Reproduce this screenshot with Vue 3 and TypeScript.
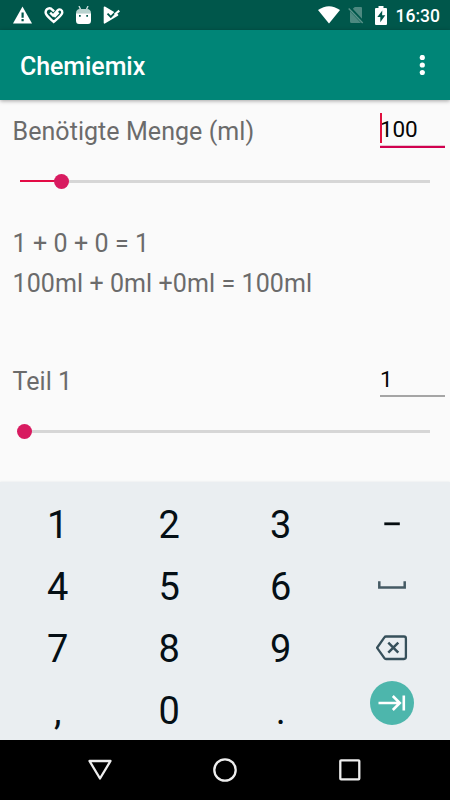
<script setup lang="ts">
import { ref } from 'vue'

interface Mixer {
  label: string
  value: string
  percent: number
  focused: boolean
}

const amount = ref<Mixer>({ label: 'Benötigte Menge (ml)', value: '100', percent: 10, focused: true })
const part = ref<Mixer>({ label: 'Teil 1', value: '1', percent: 1, focused: false })

const keys: string[] = ['1', '2', '3', 'minus', '4', '5', '6', 'space', '7', '8', '9', 'delete', ',', '0', '.', 'next']
const isDigit = (key: string): boolean => key.length === 1
</script>

<template>
  <div class="screen">
    <header class="status">
      <div class="status-left">
        <svg width="21" height="20" viewBox="0 0 21 20">
          <path d="M10.5 1.5 20 18.5H1Z" fill="#fff" />
          <path d="M9.500 7.500h2.200v5.200H9.500zM9.500 14h2.200v2.300H9.500z" fill="#00574b" />
        </svg>
        <svg width="20" height="18" viewBox="0 0 20 18">
          <path d="M10.2 10.8 14.6 6.4M6.2 6.6l2.9 2.9 4.6-5.1C15.8 2.2 18.6 4 18.3 6.7c-.2 2.6-4.2 5.4-8.6 9.2C5.5 12.100 1.700 9.300 1.600 6.600 1.500 2.500 6 .8 8.500 3.900l1.600 1.500" fill="none" stroke="#fff" stroke-width="2.400" />
        </svg>
        <svg width="17" height="19" viewBox="0 0 17 19">
          <path d="M4 0l1.800 4M13 0l-1.800 4" stroke="#c9dedb" stroke-width="1.400" />
          <path d="M1 7.500Q1 3 5 3h7q4 0 4 4.500Z" fill="#b8d2ce" />
          <path d="M1 7.300h15v7.200q0 3.500-3 3.500H4q-3 0-3-3.500Z" fill="#fff" />
          <path d="M4 9.800h1.700M11.300 9.800H13" stroke="#00574b" stroke-width="1.700" />
        </svg>
        <svg width="17" height="18" viewBox="0 0 17 18">
          <path d="M1.500 1.200 14.500 9 1.500 16.800Z" fill="#fff" stroke="#fff" stroke-width="1.600" stroke-linejoin="round" />
          <path d="m4.500 7.600 3.300 3.300 5.400-5.600" fill="none" stroke="#00574b" stroke-width="1.800" />
          <path d="m11.700 8.500 4.600-3.800" stroke="#fff" stroke-width="2.200" />
        </svg>
      </div>
      <div class="status-right">
        <svg class="wifi" width="22" height="18" viewBox="0 0 22 18">
          <path d="M0 4Q11-3.600 22 4L11 17.500Z" fill="#fff" />
        </svg>
        <svg class="sim" width="16" height="18" viewBox="0 0 16 18">
          <path d="M4.800 2.700 6.800 1H13q1 0 1 1v10.800ZM2 5.300 13 17H3.500Q2 17 2 15.500Z" fill="#4d8980" />
          <path d="m.7 2.500 14 14.500" stroke="#5a938a" stroke-width="1.400" />
        </svg>
        <svg class="battery" width="12" height="19" viewBox="0 0 12 19">
          <path d="M3.500 0h5v2H11q1 0 1 1v15q0 1-1 1H1q-1 0-1-1V3q0-1 1-1h2.500Z" fill="#fff" />
          <path d="M7.300 4.500 2.300 11h3v5.300l5-7H7.100Z" fill="#00574b" />
        </svg>
        <span class="clock">16:30</span>
      </div>
    </header>

    <div class="appbar">
      <h1>Chemiemix</h1>
      <svg width="6" height="20" viewBox="0 0 6 20" fill="#fff">
        <circle cx="3.300" cy="2.500" r="2.600" />
        <circle cx="3.300" cy="10" r="2.600" />
        <circle cx="3.300" cy="17.500" r="2.600" />
      </svg>
    </div>

    <main class="content">
      <section class="mixer">
        <div class="row">
          <span class="label">{{ amount.label }}</span>
          <div class="field focused">
            <span class="cursor"></span>{{ amount.value }}
          </div>
        </div>
        <div class="slider">
          <div class="fill" :style="{ width: amount.percent + '%' }"></div>
          <div class="thumb"></div>
          <div class="rest"></div>
        </div>
      </section>

      <section class="summary">
        <p>1 + 0 + 0 = 1</p>
        <p>100ml + 0ml +0ml = 100ml</p>
      </section>

      <section class="mixer">
        <div class="row">
          <span class="label">{{ part.label }}</span>
          <div class="field">{{ part.value }}</div>
        </div>
        <div class="slider">
          <div class="fill" :style="{ width: part.percent + '%' }"></div>
          <div class="thumb"></div>
          <div class="rest"></div>
        </div>
      </section>
    </main>

    <div class="keyboard">
      <div v-for="key in keys" :key="key" class="key">
        <span v-if="isDigit(key)">{{ key }}</span>
        <svg v-else-if="key === 'minus'" width="32" height="32" viewBox="0 0 32 32">
          <path d="M8.300 14.800h15.500" stroke="#050c10" stroke-width="2.800" />
        </svg>
        <svg v-else-if="key === 'space'" width="32" height="32" viewBox="0 0 32 32">
          <path d="M3.300 10.300v6.300h25.400v-6.300" fill="none" stroke="#455a64" stroke-width="2.500" />
        </svg>
        <svg v-else-if="key === 'delete'" width="32" height="32" viewBox="0 0 32 32">
          <path d="M10 3.500h18q1.900 0 1.900 1.900v18.700q0 1.900-1.900 1.900H10q-1 0-1.600-.9L1.100 14.800 8.400 4.400q.6-.9 1.600-.9Z" fill="none" stroke="#37505b" stroke-width="2.300" />
          <path d="m12.300 9.700 10 10m0-10-10 10" stroke="#37505b" stroke-width="2.500" />
        </svg>
        <div v-else class="next">
          <svg width="28" height="20" viewBox="0 0 28 20" fill="none" stroke="#fff" stroke-width="2.600">
            <path d="M.5 10h20.800M14.800 3l7 7-7 7M25.800 2.500v15" />
          </svg>
        </div>
      </div>
    </div>

    <nav class="navbar">
      <svg width="26" height="26" viewBox="0 0 26 26">
        <path d="M2.500 4h21L13 21.500Z" />
      </svg>
      <svg width="26" height="26" viewBox="0 0 26 26">
        <circle cx="13" cy="13" r="10.700" />
      </svg>
      <svg width="26" height="26" viewBox="0 0 26 26">
        <rect x="3.300" y="3.300" width="19" height="19" rx=".8" />
      </svg>
    </nav>
  </div>
</template>

<style>
body {
  margin: 0;
}
</style>

<style scoped>
.screen {
  width: 450px;
  height: 800px;
  display: flex;
  flex-direction: column;
  overflow: hidden;
  background: #fafafa;
  font-family: Roboto, sans-serif;
}

svg {
  display: block;
  flex: none;
}

.status {
  height: 30px;
  flex: none;
  display: flex;
  justify-content: space-between;
  align-items: center;
  background: #00574b;
  padding: 0 10px 0 12px;
}

.status-left,
.status-right {
  display: flex;
  align-items: center;
}

.status-left {
  gap: 11px;
}

.sim {
  margin-left: 8px;
}

.battery {
  margin-left: 11px;
}

.clock {
  margin-left: 9px;
  color: #fff;
  font-size: 17.5px;
  font-weight: 500;
  line-height: 30px;
  padding-top: 1px;
}

.appbar {
  height: 70px;
  flex: none;
  display: flex;
  align-items: center;
  justify-content: space-between;
  padding: 0 25px 0 20px;
  box-sizing: border-box;
  background: #008577;
  box-shadow: 0 1px 4px rgba(0, 0, 0, 0.35);
  z-index: 1;
}

h1 {
  margin: 0;
  padding-top: 3px;
  color: #fff;
  font-size: 25px;
  font-weight: 500;
  letter-spacing: -0.08px;
  line-height: 70px;
}

.content {
  flex: none;
  height: 382px;
}

.mixer {
  height: 120px;
}

.row {
  height: 61px;
  display: flex;
  align-items: flex-start;
  justify-content: space-between;
  padding: 0 5px 0 12.5px;
}

.label {
  font-size: 25px;
  letter-spacing: 0.06px;
  line-height: 63px;
  color: #6b6b6b;
}

.field {
  position: relative;
  width: 65px;
  height: 47px;
  box-sizing: border-box;
  padding-top: 14px;
  font-size: 22.5px;
  letter-spacing: -0.2px;
  line-height: 30px;
  color: #050505;
  border-bottom: 2px solid #a5a5a5;
}

.field.focused {
  height: 48px;
  border-bottom-color: #d1004f;
  box-shadow: inset 0 -1px #e6c3cf;
}

.cursor {
  position: absolute;
  left: 0;
  top: 13px;
  width: 2px;
  height: 30px;
  background: #e0103f;
}

.slider {
  height: 40px;
  padding: 0 20px;
  display: flex;
  align-items: center;
}

.fill {
  height: 2px;
  background: #e30b45;
}

.thumb {
  flex: none;
  width: 15px;
  height: 15px;
  margin: 0 -7.500px;
  border-radius: 50%;
  background: #d81b60;
  z-index: 1;
}

.rest {
  flex: 1;
  height: 3px;
  background: #d6d6d6;
}

.summary {
  height: 130px;
  box-sizing: border-box;
  padding-top: 4px;
  padding-left: 12.5px;
}

.summary p {
  margin: 0;
  font-size: 25px;
  letter-spacing: 0.09px;
  line-height: 40px;
  color: #6b6b6b;
}

.keyboard {
  flex: none;
  height: 258px;
  box-sizing: border-box;
  padding: 12px 2px 0;
  display: grid;
  grid-template-columns: repeat(4, 111.500px);
  grid-template-rows: repeat(4, 62px);
  background: #eaeef1;
  box-shadow: 0 0 2px #e2e6e8;
}

.key {
  display: flex;
  align-items: center;
  justify-content: center;
  font-size: 38px;
  line-height: 62px;
  color: #050f15;
}

.next {
  width: 44px;
  height: 44px;
  margin-bottom: 17px;
  border-radius: 50%;
  background: #4db6ac;
  display: flex;
  align-items: center;
  justify-content: center;
}

.navbar {
  flex: 1;
  display: flex;
  align-items: center;
  justify-content: center;
  gap: 99px;
  background: #000;
  z-index: 1;
}

.navbar svg {
  fill: none;
  stroke: #eee;
  stroke-width: 2.300;
  stroke-linejoin: round;
}
</style>
